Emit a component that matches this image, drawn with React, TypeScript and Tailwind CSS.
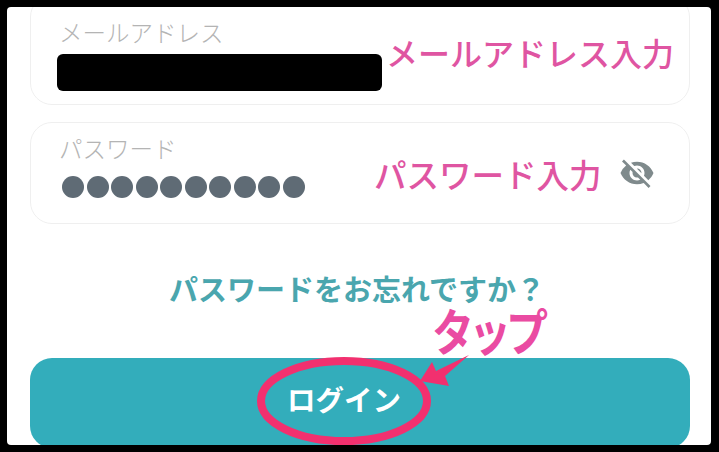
import { MdVisibilityOff } from "react-icons/md";

const jp = "font-['Noto_Sans_CJK_JP','Noto_Sans',sans-serif]";

export default function App() {
  const dots = Array.from({ length: 10 });

  return (
    <div className={`w-[719px] h-[452px] bg-black p-[7px] pr-[8px] ${jp}`}>
      <div className="relative w-full h-full bg-white rounded-[4px] overflow-hidden pl-[23px] pr-[21px] flex flex-col">
        {/* メール */}
        <div className="shrink-0 -mt-[12px] h-[110px] border border-[#efefef] rounded-[22px] pl-[26px] pt-[21px] flex">
          <div className="w-[325px] shrink-0">
            <div className="pl-[2px] text-[23.5px] leading-[30px] text-[#b4b4b4] font-light">メールアドレス</div>
            <div className="mt-[7px] h-[37px] bg-black rounded-[6px]" />
          </div>
          <div className="ml-[4px] mt-[15px] text-[32px] leading-[40px] font-medium text-[#df55a2] whitespace-nowrap">メールアドレス入力</div>
        </div>

        {/* パスワード */}
        <div className="shrink-0 mt-[17px] h-[102px] border border-[#efefef] rounded-[22px] pl-[27px] pt-[10px] flex">
          <div className="w-[316px] shrink-0">
            <div className="pl-[1px] text-[23.5px] leading-[30px] text-[#b4b4b4] font-light">パスワード</div>
            <div className="mt-[13px] pl-[4px] flex gap-[2.5px]">
              {dots.map((_, i) => (
                <div key={i} className="w-[22px] h-[22px] rounded-full bg-[#5f6b75]" />
              ))}
            </div>
          </div>
          <div className="mt-[20px] text-[32.5px] leading-[42px] font-medium text-[#df55a2] whitespace-nowrap">パスワード入力</div>
          <MdVisibilityOff className="ml-[17px] mt-[22px] text-[#7f8a8c]" size={36} />
        </div>

        <div className="mt-[48px] text-center pr-[6px] text-[29px] leading-[32px] font-bold text-[#4aa6ae] whitespace-nowrap">パスワードをお忘れですか？</div>

        <div className="shrink-0 mt-[54px] h-[90px] bg-[#33adbb] rounded-[22px] flex items-center justify-center pr-[32px] pb-[9px]">
          <span className="text-[28.5px] leading-[36px] font-bold text-white">ログイン</span>
        </div>

        {/* タップ annotation */}
        <div className="absolute left-[425px] top-[301px] h-[42px] flex items-center origin-left scale-x-[0.84] text-[50px] leading-[42px] font-bold text-[#ea4ba2] tracking-[-6px] whitespace-nowrap">タップ</div>
        <svg className="absolute left-0 top-0 pointer-events-none" width="704" height="438" viewBox="0 0 704 438" fill="none">
          <ellipse cx="337" cy="394" rx="83" ry="40" stroke="#f2306f" strokeWidth="8" />
          <polygon points="413,374 425,355 429,364 462,348 438,369 442,379" fill="#f2306f" />
        </svg>
      </div>
    </div>
  );
}
